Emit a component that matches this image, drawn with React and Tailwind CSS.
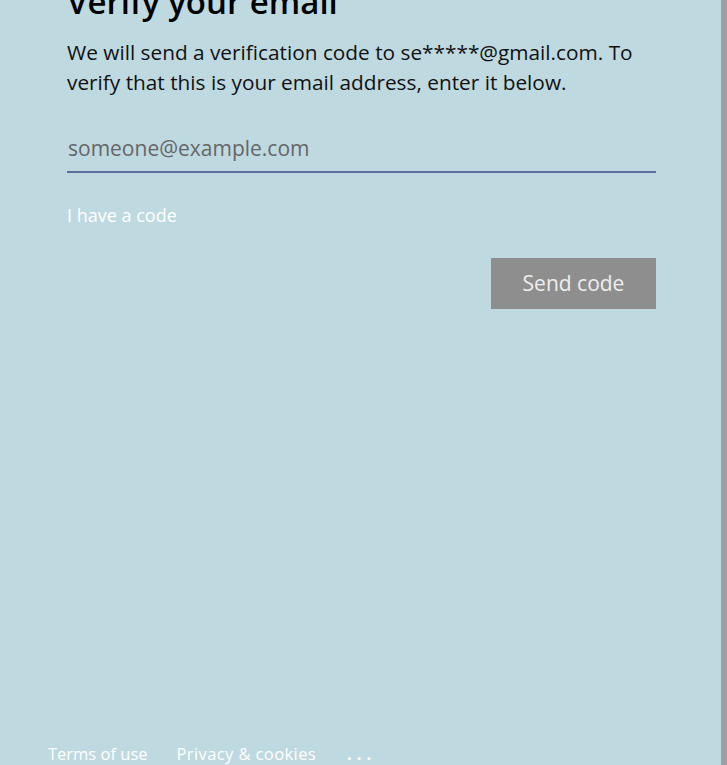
export default function App() {
  return (
    <div className="flex h-[765px] w-[727px] overflow-hidden bg-[#bfd9e0] font-['Open_Sans',sans-serif]">
      <div className="relative flex flex-1 flex-col">
        <div className="ml-[67px] w-[589px]">
          <h1 className="-mt-[18px] text-[33px] font-semibold leading-[40px] text-black">Verify your email</h1>
          <p className="mt-[15px] text-[20.8px] leading-[30px] text-[#111]">
            We will send a verification code to se*****@gmail.com. To verify that this is your email address, enter it below.
          </p>
          <div className="mt-[37px] border-b-2 border-[#5a6ea0] pb-[9px]">
            <input
              type="email"
              placeholder="someone@example.com"
              className="w-full bg-transparent pl-[1px] text-[21px] leading-[28px] text-black outline-none placeholder:text-[#666]"
            />
          </div>
          <div className="mt-[30px] text-[18px] leading-[24px] text-white">I have a code</div>
          <div className="mt-[31px] flex justify-end">
            <button className="h-[51px] w-[165px] bg-[#8e8e8e] text-[21px] text-[#eeeeee]">Send code</button>
          </div>
        </div>
        <div className="mt-auto mb-[-1px] ml-[48px] flex items-center text-[16.5px] leading-[24px] text-white">
          <span>Terms of use</span>
          <span className="ml-[29px] tracking-[0.4px]">Privacy &amp; cookies</span>
          <span className="ml-[31px] font-bold tracking-[5px]">...</span>
        </div>
      </div>
      <div className="w-[6px] bg-[#a0a0a0]" />
    </div>
  )
}
